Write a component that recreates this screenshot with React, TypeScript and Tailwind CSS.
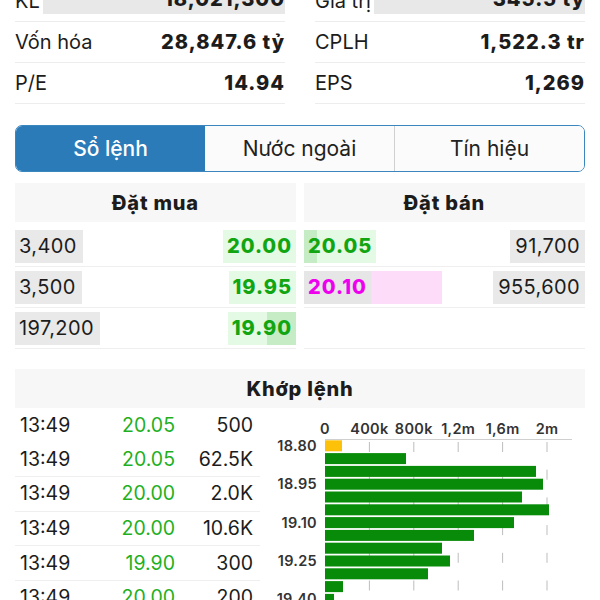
import React from "react";

const topLeft = [
  { l: "KL", v: "18,021,300", hl: true },
  { l: "Vốn hóa", v: "28,847.6 tỷ" },
  { l: "P/E", v: "14.94" },
];
const topRight = [
  { l: "Giá trị", v: "345.5 tỷ", hl: true },
  { l: "CPLH", v: "1,522.3 tr" },
  { l: "EPS", v: "1,269" },
];

function InfoCol({ rows }: { rows: { l: string; v: string; hl?: boolean }[] }) {
  return (
    <div className="flex flex-col">
      {rows.map((r) => (
        <div key={r.l} className="flex h-[41px] items-center border-b border-[#ededed]">
          <span className="text-[20px] text-[#1c1c1c]">{r.l}</span>
          {r.hl ? (
            <div className="ml-[3px] mt-[3px] flex h-[30px] flex-1 items-center justify-end self-start bg-[#e8e8e8]">
              <span className="text-[20px] font-extrabold tracking-[0.05em]">{r.v}</span>
            </div>
          ) : (
            <span className="ml-auto text-[20px] font-extrabold tracking-[0.05em]">{r.v}</span>
          )}
        </div>
      ))}
    </div>
  );
}

const trades = [
  ["13:49", "20.05", "500"],
  ["13:49", "20.05", "62.5K"],
  ["13:49", "20.00", "2.0K"],
  ["13:49", "20.00", "10.6K"],
  ["13:49", "19.90", "300"],
  ["13:49", "20.00", "200"],
];

const bars = [17, 81, 211, 218, 197, 224, 189, 149, 117, 125, 103, 18, 9];
const yLabels: [number, string][] = [
  [0, "18.80"],
  [3, "18.95"],
  [6, "19.10"],
  [9, "19.25"],
  [12, "19.40"],
];
const ticks = ["0", "400k", "800k", "1,2m", "1,6m", "2m"];

function Chart() {
  const x0 = 55;
  const step = 44.4;
  return (
    <svg width="315" height="193" className="block overflow-visible" style={{ fontFamily: "Inter, sans-serif" }}>
      {ticks.map((t, k) => (
        <text key={t} x={x0 + k * step} y={26} textAnchor="middle" fontSize="14.5" fontWeight="600" fill="#333" letterSpacing="0.3">
          {t}
        </text>
      ))}
      <line x1={x0} y1={31.5} x2={302} y2={31.5} stroke="#cfcfcf" strokeWidth="1" />
      {[1, 2, 3, 4, 5].map((k) => (
        <line
          key={k}
          x1={x0 + k * step}
          x2={x0 + k * step}
          y1={34}
          y2={200}
          stroke="#bdbdbd"
          strokeWidth="1"
          strokeDasharray="10 17.7"
        />
      ))}
      {bars.map((w, i) => (
        <rect key={i} x={x0} y={32.3 + i * 12.8} width={w} height={11} fill={i === 0 ? "#fdc10a" : "#088b08"} />
      ))}
      {yLabels.map(([i, t]) => (
        <text key={t} x={47} y={32.3 + i * 12.8 + 10.5} textAnchor="end" fontSize="14.5" fontWeight="600" fill="#333" letterSpacing="0.3">
          {t}
        </text>
      ))}
    </svg>
  );
}

export default function App() {
  return (
    <div
      className="h-[600px] w-[600px] overflow-hidden bg-white px-[15px] text-[#1c1c1c]"
      style={{ fontFamily: "Inter, 'Noto Sans', sans-serif" }}
    >
      <div className="-mt-[19px] grid grid-cols-2 gap-x-[30px]">
        <InfoCol rows={topLeft} />
        <InfoCol rows={topRight} />
      </div>

      <div className="mt-[21px] flex h-[47px] overflow-hidden rounded-[7px] border border-[#3a86be] text-[21px]">
        <div className="flex flex-1 items-center justify-center bg-[#2b7bb9] font-medium text-white">Sổ lệnh</div>
        <div className="flex flex-1 items-center justify-center border-r border-[#d0d0d0] bg-[#fbfbfb] text-[#222]">
          Nước ngoài
        </div>
        <div className="flex flex-1 items-center justify-center bg-[#fbfbfb] text-[#222]">Tín hiệu</div>
      </div>

      <div className="mt-[11px] grid grid-cols-2 gap-x-[8px] text-[20px]">
        <div>
          <div className="flex h-[39px] items-center justify-center bg-[#f7f7f7] font-extrabold tracking-[0.04em]">
            Đặt mua
          </div>
          <div className="mt-[4px]">
            {[
              ["3,400", "20.00", 0],
              ["3,500", "19.95", 0],
              ["197,200", "19.90", 29],
            ].map(([v, p, d]) => (
              <div key={v as string} className="flex h-[41px] items-center justify-between border-b border-[#efefef]">
                <div className="flex h-[33px] items-center bg-[#e9e9e9] pl-[4px] pr-[6px] tracking-[0.02em]">{v}</div>
                <div className="relative flex h-[33px] items-center bg-[#e4fae4] px-[4px] font-extrabold tracking-[0.05em] text-[#12a512]">
                  {(d as number) > 0 && (
                    <div className="absolute right-0 top-0 h-full bg-[#c6ecc6]" style={{ width: d as number }} />
                  )}
                  <span className="relative">{p}</span>
                </div>
              </div>
            ))}
          </div>
        </div>
        <div>
          <div className="flex h-[39px] items-center justify-center bg-[#f7f7f7] font-extrabold tracking-[0.04em]">
            Đặt bán
          </div>
          <div className="mt-[4px]">
            <div className="flex h-[41px] items-center justify-between border-b border-[#efefef]">
              <div className="relative flex h-[33px] items-center bg-[#e4fae4] px-[4px] font-extrabold tracking-[0.05em] text-[#12a512]">
                <div className="absolute left-0 top-0 h-full w-[13px] bg-[#c6ecc6]" />
                <span className="relative">20.05</span>
              </div>
              <div className="flex h-[33px] items-center bg-[#e9e9e9] px-[5px] tracking-[0.02em]">91,700</div>
            </div>
            <div className="flex h-[41px] items-center border-b border-[#efefef]">
              <div className="flex h-[33px] items-center bg-[#e6e6e6] px-[4px] font-extrabold tracking-[0.05em] text-[#ee00ee]">
                20.10
              </div>
              <div className="h-[33px] w-[71px] bg-[#fcdcf8]" />
              <div className="ml-auto flex h-[33px] items-center bg-[#e9e9e9] px-[5px] tracking-[0.02em]">955,600</div>
            </div>
            <div className="h-[41px] border-b border-[#efefef]" />
          </div>
        </div>
      </div>

      <div className="mt-[20px] flex h-[39px] items-center justify-center bg-[#f7f7f7] text-[20px] font-extrabold tracking-[0.04em]">
        Khớp lệnh
      </div>

      <div className="flex">
        <div className="w-[245px] shrink-0 text-[19.5px]">
          {trades.map(([t, p, v], i) => (
            <div
              key={i}
              className={`flex h-[34.6px] items-center pl-[5px] pr-[7px] ${
                i >= 1 ? "border-b border-[#efefef]" : ""
              }`}
            >
              <span className="flex-1">{t}</span>
              <span className="text-[#1fb01f]">{p}</span>
              <span className="w-[78px] text-right">{v}</span>
            </div>
          ))}
        </div>
        <div className="ml-[10px] shrink-0">
          <Chart />
        </div>
      </div>
    </div>
  );
}
